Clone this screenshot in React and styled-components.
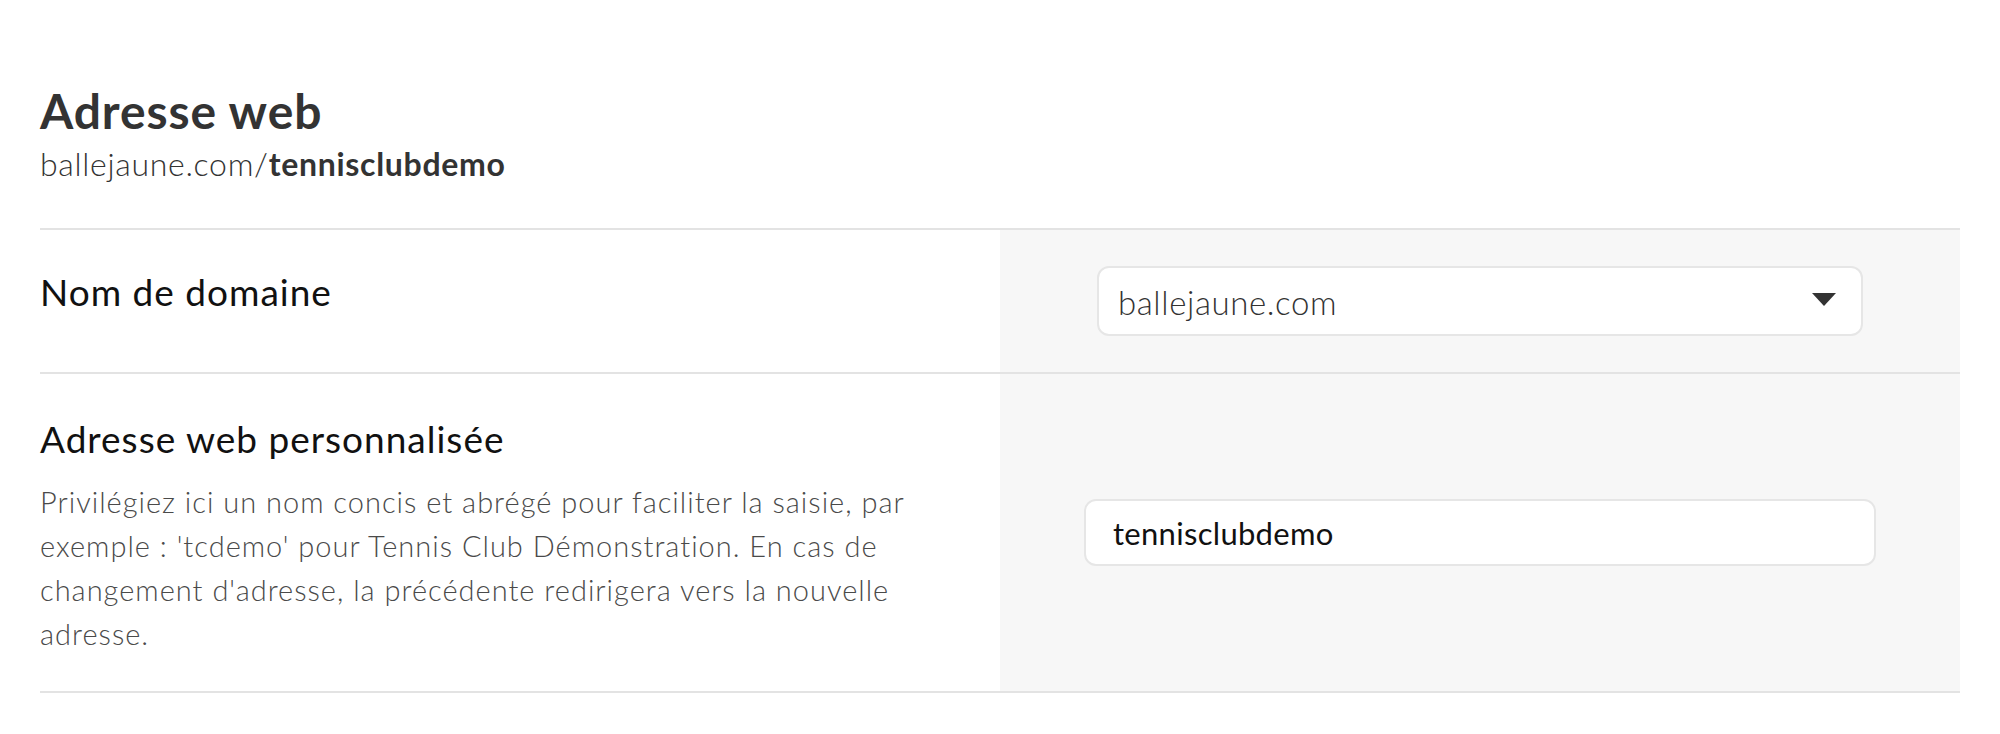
import React from 'react';
import styled, { createGlobalStyle } from 'styled-components';

const GlobalStyle = createGlobalStyle`
  html, body {
    margin: 0;
    padding: 0;
    background: #fff;
  }
  body {
    font-family: Lato, "Open Sans", sans-serif;
    color: #333;
  }
`;

function App() {
  return (
    <>
      <GlobalStyle />
      <Page>
        <Header>
          <Title>Adresse web</Title>
          <Url>ballejaune.com/<b>tennisclubdemo</b></Url>
        </Header>

        <Table>
          <Row>
            <LabelCell center>
              <Label>Nom de domaine</Label>
            </LabelCell>
            <FieldCell>
              <SelectWrap>
                <Select defaultValue="ballejaune.com">
                  <option value="ballejaune.com">ballejaune.com</option>
                </Select>
                <Arrow width="24" height="13" viewBox="0 0 24 13">
                  <path d="M0 0 L24 0 L12 13 Z" fill="#333" />
                </Arrow>
              </SelectWrap>
            </FieldCell>
          </Row>

          <Row>
            <LabelCell>
              <Label>Adresse web personnalisée</Label>
              <Help>
                Privilégiez ici un nom concis et abrégé pour faciliter la saisie, par
                exemple : 'tcdemo' pour Tennis Club Démonstration. En cas de
                changement d'adresse, la précédente redirigera vers la nouvelle
                adresse.
              </Help>
            </LabelCell>
            <FieldCell>
              <Input defaultValue="tennisclubdemo" />
            </FieldCell>
          </Row>
        </Table>
      </Page>
    </>
  );
}

export default App;

const Page = styled.div`
  padding: 87px 40px 40px;
`;

const Header = styled.div`
  padding-bottom: 46px;
`;

const Title = styled.h1`
  margin: 0;
  font-size: 48px;
  line-height: 48px;
  font-weight: 700;
  letter-spacing: 0.9px;
  color: #333;
`;

const Url = styled.div`
  margin-top: 11px;
  font-size: 32px;
  line-height: 36px;
  font-weight: 300;
  letter-spacing: 0.7px;
  color: #333;

  b {
    font-weight: 700;
  }
`;

const Table = styled.div`
  border-top: 2px solid #e3e3e3;
`;

const Row = styled.div`
  display: grid;
  grid-template-columns: 1fr 1fr;
  border-bottom: 2px solid #e3e3e3;
`;

const LabelCell = styled.div`
  display: flex;
  flex-direction: column;
  justify-content: ${p => (p.center ? 'center' : 'flex-start')};
  padding: ${p => (p.center ? '0 60px 18px 0' : '43px 60px 35px 0')};
`;

const Label = styled.div`
  font-size: 37px;
  line-height: 44px;
  font-weight: 400;
  letter-spacing: 1px;
  color: #111;
`;

const Help = styled.p`
  margin: 19px 0 0;
  font-size: 29px;
  line-height: 44px;
  font-weight: 300;
  letter-spacing: 1px;
  color: #4a4a4a;
`;

const FieldCell = styled.div`
  display: flex;
  align-items: center;
  background: #f7f7f7;
  padding: 36px 84px;
`;

const SelectWrap = styled.div`
  position: relative;
  flex: 1;
  margin: 0 13px;
`;

const Select = styled.select`
  appearance: none;
  width: 100%;
  height: 70px;
  box-sizing: border-box;
  padding: 2px 60px 0 19px;
  border: 2px solid #e6e6e6;
  border-radius: 12px;
  background: #fff;
  font-family: Lato, "Open Sans", sans-serif;
  font-size: 33px;
  font-weight: 300;
  letter-spacing: 0.6px;
  color: #333;
  outline: none;
`;

const Arrow = styled.svg`
  position: absolute;
  right: 27px;
  top: 27px;
  pointer-events: none;
`;

const Input = styled.input`
  flex: 1;
  height: 67px;
  box-sizing: border-box;
  padding: 0 27px;
  border: 2px solid #e6e6e6;
  border-radius: 12px;
  background: #fff;
  font-family: Lato, "Open Sans", sans-serif;
  font-size: 31px;
  font-weight: 400;
  letter-spacing: 0.3px;
  color: #111;
  outline: none;
`;
